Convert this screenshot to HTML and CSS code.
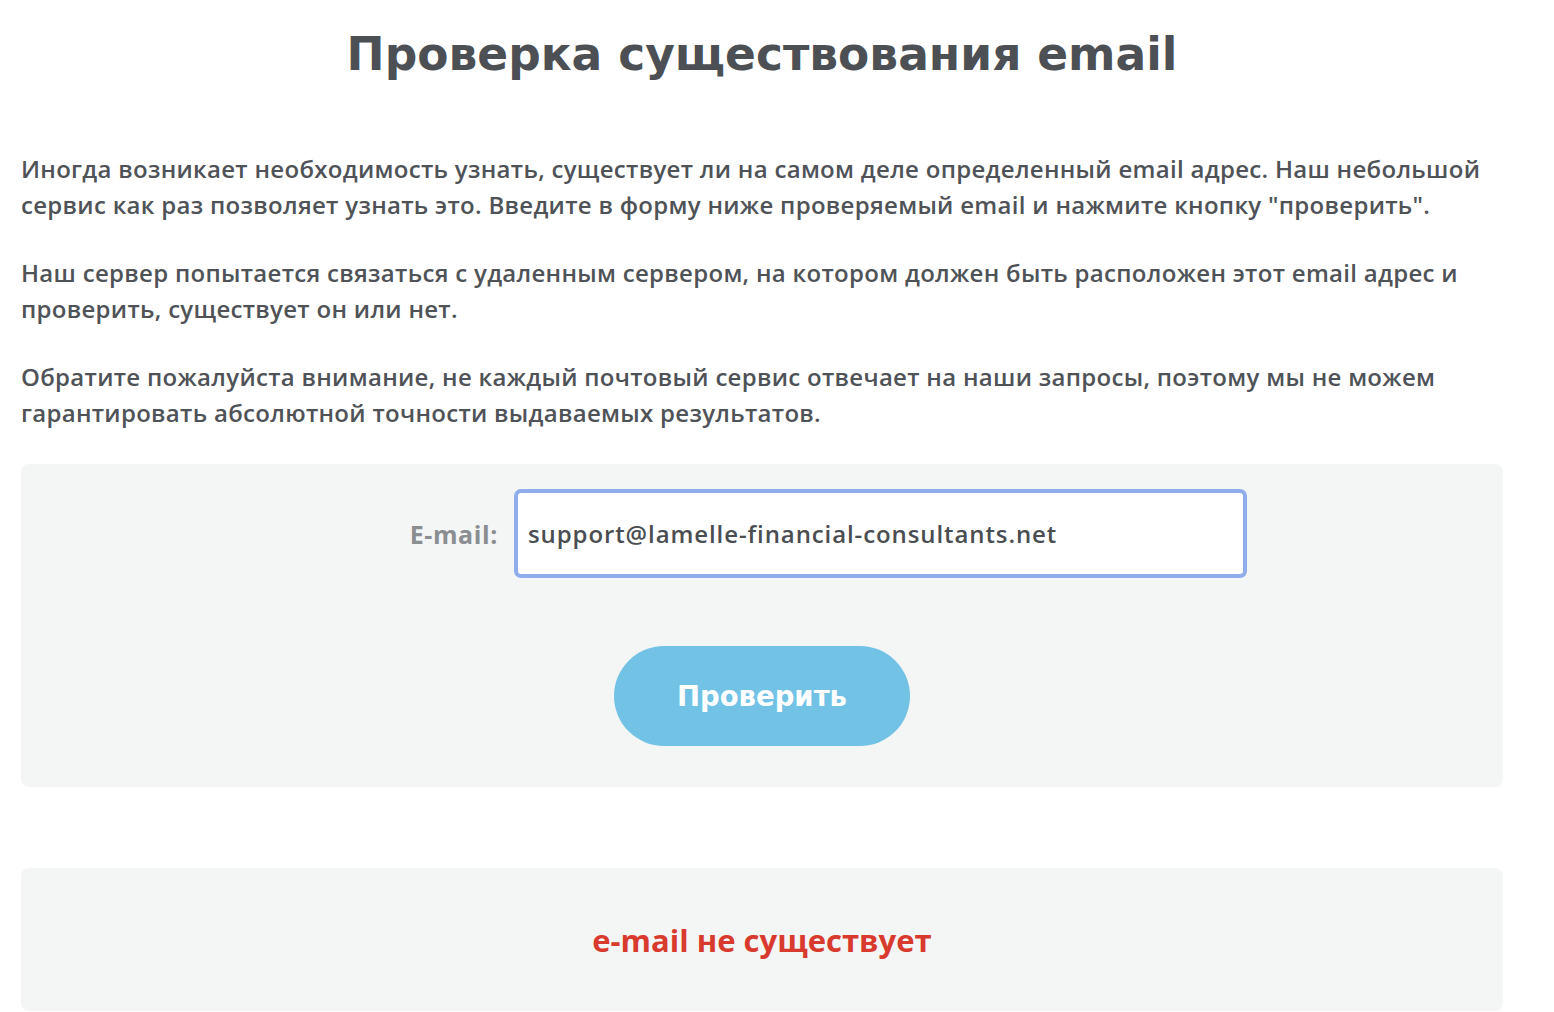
FILE: index.html
```html
<!DOCTYPE html>
<html lang="ru">
<head>
    <title>Проверка существования email</title>
    <meta charset="UTF-8">
    <meta name="viewport" content="width=device-width, initial-scale=1">
    <link rel="stylesheet" href="styles.css">
</head>
<body>
    <div class="page">
        <h1 class="title">Проверка существования email</h1>
        <p>Иногда возникает необходимость узнать, существует ли на самом деле определенный email адрес. Наш небольшой сервис как раз позволяет узнать это. Введите в форму ниже проверяемый email и нажмите кнопку "проверить".</p>
        <p>Наш сервер попытается связаться с удаленным сервером, на котором должен быть расположен этот email адрес и проверить, существует он или нет.</p>
        <p>Обратите пожалуйста внимание, не каждый почтовый сервис отвечает на наши запросы, поэтому мы не можем гарантировать абсолютной точности выдаваемых результатов.</p>
        <form class="panel check-form">
            <div class="field">
                <label for="email">E-mail:</label>
                <input type="text" id="email" value="support@lamelle-financial-consultants.net">
            </div>
            <button type="button" class="check-btn">Проверить</button>
        </form>
        <div class="panel result">
            <span class="result-text">e-mail не существует</span>
        </div>
    </div>
</body>
</html>
```
FILE: styles.css
```css
body, html {
    padding: 0;
    margin: 0;
    background: #fff;
    font-family: "Open Sans", "Noto Sans", sans-serif;
    color: #4f5358;
}

.page {
    width: 1482px;
    margin-left: 21px;
    padding-top: 25px;
}

.title {
    margin: 0 0 66px;
    font-family: "DejaVu Sans", sans-serif;
    font-size: 45.5px;
    line-height: 60px;
    font-weight: bold;
    text-align: center;
    color: #4c5055;
}

p {
    margin: 0 0 32px;
    font-size: 24px;
    line-height: 36px;
    font-weight: 600;
    letter-spacing: 0.3px;
}

.panel {
    background: #f4f5f5;
    border-radius: 8px;
}

.check-form {
    margin-top: 33px;
    padding: 25px 0 41px;
    display: flex;
    flex-direction: column;
    align-items: center;
}

.field {
    align-self: stretch;
    display: flex;
    align-items: center;
    padding-left: 327px;
}

.field label {
    width: 150px;
    margin-right: 16px;
    text-align: right;
    font-size: 25px;
    font-weight: 700;
    letter-spacing: 0.6px;
    color: #8b8e91;
}

.field input {
    box-sizing: border-box;
    width: 733px;
    height: 89px;
    padding: 0 10px;
    border: 4px solid #8fadeb;
    border-radius: 7px;
    background: #fff;
    font-family: inherit;
    font-size: 24px;
    font-weight: 600;
    letter-spacing: 0.9px;
    color: #4a4e52;
    outline: none;
}

.check-btn {
    margin-top: 68px;
    width: 296px;
    height: 100px;
    border: none;
    border-radius: 50px;
    background: #72c2e6;
    color: #fff;
    font-family: "DejaVu Sans", sans-serif;
    font-size: 27.5px;
    font-weight: bold;
    cursor: pointer;
}

.result {
    margin-top: 81px;
    height: 143px;
    display: flex;
    align-items: center;
    justify-content: center;
}

.result-text {
    font-size: 31px;
    font-weight: 700;
    color: #d93a2e;
}
```
